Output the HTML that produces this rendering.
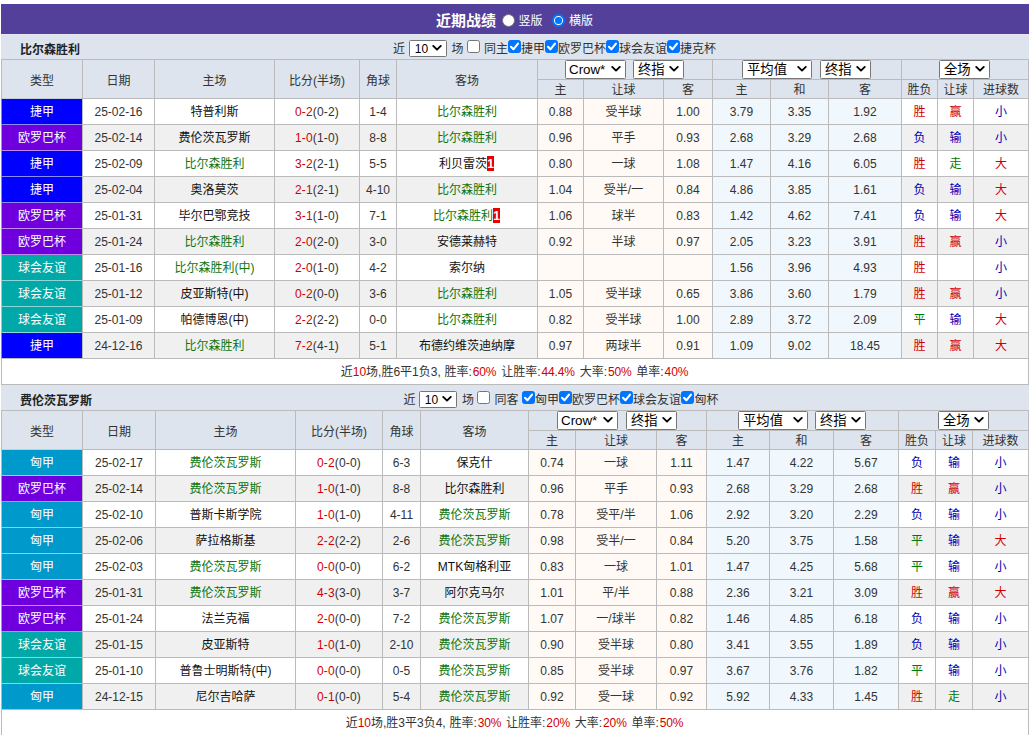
<!DOCTYPE html>
<html lang="zh-CN">
<head>
<meta charset="utf-8">
<title>近期战绩</title>
<style>
html,body{margin:0;padding:0;background:#fff;}
body{width:1032px;height:735px;overflow:hidden;position:relative;
 font-family:"Liberation Sans","Noto Sans CJK SC",sans-serif;font-size:12px;color:#333;}
#wrap{position:absolute;left:1px;top:4px;width:1028px;}
.title{height:30px;background:#52409a;color:#fff;position:relative;}
.title .tt{position:absolute;left:435px;top:2px;line-height:30px;font-size:15px;font-weight:bold;}
.title .rt{position:absolute;top:2px;line-height:31px;font-size:12px;}
.title .rd{position:absolute;top:10px;width:13px;height:13px;border-radius:50%;background:#fff;box-sizing:border-box;border:1px solid #767676;}
.title .rd.on{border:2px solid #0075ff;}
.title .rd.on:after{content:"";position:absolute;left:1.2px;top:1.2px;width:6.6px;height:6.6px;border-radius:50%;background:#0075ff;}
.team{height:25px;background:#dde4ed;position:relative;border-top:1px solid #e6e8f8;box-sizing:border-box;}
.team.t2{border-top-color:#dde4ed;}
.team .tn{position:absolute;left:19px;top:0;line-height:31px;font-weight:bold;color:#222;}
.team .tx{position:absolute;top:0;font-size:12px;line-height:29px;white-space:nowrap;}
.cb{position:absolute;top:5px;width:13px;height:13px;box-sizing:border-box;border:1px solid #767676;border-radius:2.5px;background:#fff;}
.cb.on{background:#0075ff;border-color:#0075ff;}
.cb svg{display:block;margin:-1px;}
.sel{box-sizing:border-box;border:1px solid #767676;border-radius:1.5px;background:#fff;color:#000;text-align:left;}
.sel .st{position:absolute;left:3px;top:0;white-space:nowrap;}
.sel .ar{position:absolute;right:3.2px;}
.sel.s10{position:absolute;top:5px;height:17px;}
.sel.s10 .st{font-size:12px;line-height:17px;left:4.8px;}
.sel.s10 .ar{top:3.3px;right:2.6px;}
.sel.hs{display:inline-block;position:relative;vertical-align:top;height:19px;}
.sel.hs .st{font-size:13.333px;line-height:17px;left:4px;}
.sel.hs.en .st{left:3px;}
.sel.hs .ar{top:4.2px;}
table.g{border-collapse:separate;border-spacing:0;table-layout:fixed;width:1028px;}
table.g th,table.g td{box-sizing:border-box;border-left:1px solid #bbb;border-top:1px solid #bbb;padding:0;text-align:center;font-weight:normal;font-size:12px;white-space:nowrap;overflow:hidden;}
table.g th:last-child,table.g td:last-child{border-right:1px solid #bbb;}
table.g th{background:#dde4ed;color:#333;}
tr.h1 th{padding-top:1px;}
table.g tr.h1 th.hc{height:20px;font-size:0;padding:0;text-align:left;}
tr.h2 th{height:19px;line-height:16px;padding-top:2px;}
tr.od td,tr.ev td,tr.sum td{height:26px;line-height:24px;padding-top:1px;}
tr.od td{background:#fff;}
tr.ev td{background:#f0f0f0;}
tr.od td.as,tr.ev td.as{background:#fffaf5;}
tr.od td.eu,tr.ev td.eu{background:#f0f7fd;}
table.g td.lg{color:#fff;border-left-color:rgba(255,255,255,.5);}
tr.sum td{background:#fff;border-bottom:1px solid #bbb;height:27px;}
.r{color:#d00000;}
tr.sum td{word-spacing:.4px;}
tr.sum .p{margin:0 1px 0 .9px;letter-spacing:-.1px;}
td.sc{letter-spacing:.18px;}
.b{color:#0000b4;}
.gn{color:#007a00;}
.gr{color:#0e740e;}
td.tm{color:#111;}
.rc{display:inline-block;background:#e60000;color:#fff;font-weight:bold;font-size:12px;line-height:16.5px;height:15px;width:7px;margin-right:1px;text-align:center;vertical-align:top;margin-top:4px;overflow:hidden;}

</style>
</head>
<body>
<div id="wrap">
<div class="title"><b class="tt">近期战绩</b><span class="rd" style="left:501px"></span><span class="rt" style="left:517.5px">竖版</span><span class="rd on" style="left:551px"></span><span class="rt" style="left:568px">横版</span></div>
<div class="team t1">
<b class="tn">比尔森胜利</b>
<span class="tx" style="left:392px">近</span>
<span class="sel s10" style="width:38px;left:408px"><span class="st">10</span><svg class="ar" viewBox="0 0 12 8" width="12" height="8"><path d="M2.2 1.9 L6 5.6 L9.8 1.9" fill="none" stroke="#000" stroke-width="1.9" stroke-linecap="round" stroke-linejoin="round"/></svg></span>
<span class="tx" style="left:450.5px">场</span>
<span class="cb" style="left:466px"></span>
<span class="tx" style="left:483px">同主</span>
<span class="cb on" style="left:507px"><svg viewBox="0 0 13 13" width="13" height="13"><path d="M3 6.8 L5.4 9.3 L10 3.6" fill="none" stroke="#fff" stroke-width="2.1" stroke-linecap="round" stroke-linejoin="round"/></svg></span>
<span class="tx" style="left:520px">捷甲</span>
<span class="cb on" style="left:544px"><svg viewBox="0 0 13 13" width="13" height="13"><path d="M3 6.8 L5.4 9.3 L10 3.6" fill="none" stroke="#fff" stroke-width="2.1" stroke-linecap="round" stroke-linejoin="round"/></svg></span>
<span class="tx" style="left:557px">欧罗巴杯</span>
<span class="cb on" style="left:605px"><svg viewBox="0 0 13 13" width="13" height="13"><path d="M3 6.8 L5.4 9.3 L10 3.6" fill="none" stroke="#fff" stroke-width="2.1" stroke-linecap="round" stroke-linejoin="round"/></svg></span>
<span class="tx" style="left:618px">球会友谊</span>
<span class="cb on" style="left:666px"><svg viewBox="0 0 13 13" width="13" height="13"><path d="M3 6.8 L5.4 9.3 L10 3.6" fill="none" stroke="#fff" stroke-width="2.1" stroke-linecap="round" stroke-linejoin="round"/></svg></span>
<span class="tx" style="left:679px">捷克杯</span>
</div>
<table class="g t1">
<colgroup><col style="width:81px"><col style="width:72px"><col style="width:120px"><col style="width:85px"><col style="width:37px"><col style="width:141px"><col style="width:46px"><col style="width:80px"><col style="width:49px"><col style="width:58px"><col style="width:58px"><col style="width:73px"><col style="width:36px"><col style="width:36px"><col style="width:56px"></colgroup>
<tr class="h1"><th rowspan="2">类型</th><th rowspan="2">日期</th><th rowspan="2">主场</th><th rowspan="2">比分(半场)</th><th rowspan="2">角球</th><th rowspan="2">客场</th><th colspan="3" class="hc"><span class="sel hs en" style="width:61px;margin-left:27px"><span class="st">Crow*</span><svg class="ar" viewBox="0 0 12 8" width="12" height="8"><path d="M2.2 1.9 L6 5.6 L9.8 1.9" fill="none" stroke="#000" stroke-width="1.9" stroke-linecap="round" stroke-linejoin="round"/></svg></span><span class="sel hs" style="width:51px;margin-left:7px"><span class="st">终指</span><svg class="ar" viewBox="0 0 12 8" width="12" height="8"><path d="M2.2 1.9 L6 5.6 L9.8 1.9" fill="none" stroke="#000" stroke-width="1.9" stroke-linecap="round" stroke-linejoin="round"/></svg></span></th><th colspan="3" class="hc"><span class="sel hs" style="width:70px;margin-left:29px"><span class="st">平均值</span><svg class="ar" viewBox="0 0 12 8" width="12" height="8"><path d="M2.2 1.9 L6 5.6 L9.8 1.9" fill="none" stroke="#000" stroke-width="1.9" stroke-linecap="round" stroke-linejoin="round"/></svg></span><span class="sel hs" style="width:51px;margin-left:8px"><span class="st">终指</span><svg class="ar" viewBox="0 0 12 8" width="12" height="8"><path d="M2.2 1.9 L6 5.6 L9.8 1.9" fill="none" stroke="#000" stroke-width="1.9" stroke-linecap="round" stroke-linejoin="round"/></svg></span></th><th colspan="3" class="hc"><span class="sel hs" style="width:51px;margin-left:37px"><span class="st">全场</span><svg class="ar" viewBox="0 0 12 8" width="12" height="8"><path d="M2.2 1.9 L6 5.6 L9.8 1.9" fill="none" stroke="#000" stroke-width="1.9" stroke-linecap="round" stroke-linejoin="round"/></svg></span></th></tr>
<tr class="h2"><th>主</th><th>让球</th><th>客</th><th>主</th><th>和</th><th>客</th><th>胜负</th><th>让球</th><th>进球数</th></tr>
<tr class="od"><td class="lg" style="background:#0000ff;border-top-color:#c4ccd6">捷甲</td><td>25-02-16</td><td class="tm">特普利斯</td><td class="sc"><span class="r">0-2</span>(0-2)</td><td>1-4</td><td class="tm"><span class="gr">比尔森胜利</span></td><td class="as">0.88</td><td class="as">受半球</td><td class="as">1.00</td><td class="eu">3.79</td><td class="eu">3.35</td><td class="eu">1.92</td><td><span class="r">胜</span></td><td><span class="r">赢</span></td><td><span class="b">小</span></td></tr>
<tr class="ev"><td class="lg" style="background:#6f00dd;border-top-color:#8c8cff">欧罗巴杯</td><td>25-02-14</td><td class="tm">费伦茨瓦罗斯</td><td class="sc"><span class="r">1-0</span>(1-0)</td><td>8-8</td><td class="tm"><span class="gr">比尔森胜利</span></td><td class="as">0.96</td><td class="as">平手</td><td class="as">0.93</td><td class="eu">2.68</td><td class="eu">3.29</td><td class="eu">2.68</td><td><span class="b">负</span></td><td><span class="b">输</span></td><td><span class="b">小</span></td></tr>
<tr class="od"><td class="lg" style="background:#0000ff;border-top-color:#be8cf0">捷甲</td><td>25-02-09</td><td class="tm"><span class="gr">比尔森胜利</span></td><td class="sc"><span class="r">3-2</span>(2-1)</td><td>5-5</td><td class="tm">利贝雷茨<span class="rc">1</span></td><td class="as">0.80</td><td class="as">一球</td><td class="as">1.08</td><td class="eu">1.47</td><td class="eu">4.16</td><td class="eu">6.05</td><td><span class="r">胜</span></td><td><span class="gn">走</span></td><td><span class="r">大</span></td></tr>
<tr class="ev"><td class="lg" style="background:#0000ff;border-top-color:#8c8cff">捷甲</td><td>25-02-04</td><td class="tm">奥洛莫茨</td><td class="sc"><span class="r">2-1</span>(2-1)</td><td>4-10</td><td class="tm"><span class="gr">比尔森胜利</span></td><td class="as">1.04</td><td class="as">受半/一</td><td class="as">0.84</td><td class="eu">4.86</td><td class="eu">3.85</td><td class="eu">1.61</td><td><span class="b">负</span></td><td><span class="b">输</span></td><td><span class="r">大</span></td></tr>
<tr class="od"><td class="lg" style="background:#6f00dd;border-top-color:#8c8cff">欧罗巴杯</td><td>25-01-31</td><td class="tm">毕尔巴鄂竞技</td><td class="sc"><span class="r">3-1</span>(1-0)</td><td>7-1</td><td class="tm"><span class="gr">比尔森胜利</span><span class="rc">1</span></td><td class="as">1.06</td><td class="as">球半</td><td class="as">0.83</td><td class="eu">1.42</td><td class="eu">4.62</td><td class="eu">7.41</td><td><span class="b">负</span></td><td><span class="b">输</span></td><td><span class="r">大</span></td></tr>
<tr class="ev"><td class="lg" style="background:#6f00dd;border-top-color:#be8cf0">欧罗巴杯</td><td>25-01-24</td><td class="tm"><span class="gr">比尔森胜利</span></td><td class="sc"><span class="r">2-0</span>(2-0)</td><td>3-0</td><td class="tm">安德莱赫特</td><td class="as">0.92</td><td class="as">半球</td><td class="as">0.97</td><td class="eu">2.05</td><td class="eu">3.23</td><td class="eu">3.91</td><td><span class="r">胜</span></td><td><span class="r">赢</span></td><td><span class="b">小</span></td></tr>
<tr class="od"><td class="lg" style="background:#00a8a8;border-top-color:#be8cf0">球会友谊</td><td>25-01-16</td><td class="tm"><span class="gr">比尔森胜利(中)</span></td><td class="sc"><span class="r">2-0</span>(1-0)</td><td>4-2</td><td class="tm">索尔纳</td><td class="as"></td><td class="as"></td><td class="as"></td><td class="eu">1.56</td><td class="eu">3.96</td><td class="eu">4.93</td><td><span class="r">胜</span></td><td></td><td><span class="b">小</span></td></tr>
<tr class="ev"><td class="lg" style="background:#00a8a8;border-top-color:#8cd8d8">球会友谊</td><td>25-01-12</td><td class="tm">皮亚斯特(中)</td><td class="sc"><span class="r">0-2</span>(0-0)</td><td>3-6</td><td class="tm"><span class="gr">比尔森胜利</span></td><td class="as">1.05</td><td class="as">受半球</td><td class="as">0.65</td><td class="eu">3.86</td><td class="eu">3.60</td><td class="eu">1.79</td><td><span class="r">胜</span></td><td><span class="r">赢</span></td><td><span class="b">小</span></td></tr>
<tr class="od"><td class="lg" style="background:#00a8a8;border-top-color:#8cd8d8">球会友谊</td><td>25-01-09</td><td class="tm">帕德博恩(中)</td><td class="sc"><span class="r">2-2</span>(2-2)</td><td>0-0</td><td class="tm"><span class="gr">比尔森胜利</span></td><td class="as">0.82</td><td class="as">受半球</td><td class="as">1.00</td><td class="eu">2.89</td><td class="eu">3.72</td><td class="eu">2.09</td><td><span class="gn">平</span></td><td><span class="b">输</span></td><td><span class="r">大</span></td></tr>
<tr class="ev"><td class="lg" style="background:#0000ff;border-top-color:#8cd8d8">捷甲</td><td>24-12-16</td><td class="tm"><span class="gr">比尔森胜利</span></td><td class="sc"><span class="r">7-2</span>(4-1)</td><td>5-1</td><td class="tm">布德约维茨迪纳摩</td><td class="as">0.97</td><td class="as">两球半</td><td class="as">0.91</td><td class="eu">1.09</td><td class="eu">9.02</td><td class="eu">18.45</td><td><span class="r">胜</span></td><td><span class="r">赢</span></td><td><span class="r">大</span></td></tr>
<tr class="sum"><td colspan="15">近<span class="r">10</span>场,胜6平1负3, 胜率:<span class="r p">60%</span> 让胜率:<span class="r p">44.4%</span> 大率:<span class="r p">50%</span> 单率:<span class="r p">40%</span></td></tr>
</table>
<div class="team t2">
<b class="tn">费伦茨瓦罗斯</b>
<span class="tx" style="left:402.5px">近</span>
<span class="sel s10" style="width:38px;left:418px"><span class="st">10</span><svg class="ar" viewBox="0 0 12 8" width="12" height="8"><path d="M2.2 1.9 L6 5.6 L9.8 1.9" fill="none" stroke="#000" stroke-width="1.9" stroke-linecap="round" stroke-linejoin="round"/></svg></span>
<span class="tx" style="left:461px">场</span>
<span class="cb" style="left:476px"></span>
<span class="tx" style="left:493.5px">同客</span>
<span class="cb on" style="left:521px"><svg viewBox="0 0 13 13" width="13" height="13"><path d="M3 6.8 L5.4 9.3 L10 3.6" fill="none" stroke="#fff" stroke-width="2.1" stroke-linecap="round" stroke-linejoin="round"/></svg></span>
<span class="tx" style="left:534px">匈甲</span>
<span class="cb on" style="left:558px"><svg viewBox="0 0 13 13" width="13" height="13"><path d="M3 6.8 L5.4 9.3 L10 3.6" fill="none" stroke="#fff" stroke-width="2.1" stroke-linecap="round" stroke-linejoin="round"/></svg></span>
<span class="tx" style="left:571px">欧罗巴杯</span>
<span class="cb on" style="left:619px"><svg viewBox="0 0 13 13" width="13" height="13"><path d="M3 6.8 L5.4 9.3 L10 3.6" fill="none" stroke="#fff" stroke-width="2.1" stroke-linecap="round" stroke-linejoin="round"/></svg></span>
<span class="tx" style="left:632px">球会友谊</span>
<span class="cb on" style="left:680px"><svg viewBox="0 0 13 13" width="13" height="13"><path d="M3 6.8 L5.4 9.3 L10 3.6" fill="none" stroke="#fff" stroke-width="2.1" stroke-linecap="round" stroke-linejoin="round"/></svg></span>
<span class="tx" style="left:693.5px">匈杯</span>
</div>
<table class="g t2">
<colgroup><col style="width:81px"><col style="width:73px"><col style="width:140px"><col style="width:87px"><col style="width:38px"><col style="width:108px"><col style="width:47px"><col style="width:81px"><col style="width:50px"><col style="width:63px"><col style="width:64px"><col style="width:65px"><col style="width:37px"><col style="width:37px"><col style="width:57px"></colgroup>
<tr class="h1"><th rowspan="2">类型</th><th rowspan="2">日期</th><th rowspan="2">主场</th><th rowspan="2">比分(半场)</th><th rowspan="2">角球</th><th rowspan="2">客场</th><th colspan="3" class="hc"><span class="sel hs en" style="width:61px;margin-left:28px"><span class="st">Crow*</span><svg class="ar" viewBox="0 0 12 8" width="12" height="8"><path d="M2.2 1.9 L6 5.6 L9.8 1.9" fill="none" stroke="#000" stroke-width="1.9" stroke-linecap="round" stroke-linejoin="round"/></svg></span><span class="sel hs" style="width:51px;margin-left:8px"><span class="st">终指</span><svg class="ar" viewBox="0 0 12 8" width="12" height="8"><path d="M2.2 1.9 L6 5.6 L9.8 1.9" fill="none" stroke="#000" stroke-width="1.9" stroke-linecap="round" stroke-linejoin="round"/></svg></span></th><th colspan="3" class="hc"><span class="sel hs" style="width:70px;margin-left:31px"><span class="st">平均值</span><svg class="ar" viewBox="0 0 12 8" width="12" height="8"><path d="M2.2 1.9 L6 5.6 L9.8 1.9" fill="none" stroke="#000" stroke-width="1.9" stroke-linecap="round" stroke-linejoin="round"/></svg></span><span class="sel hs" style="width:51px;margin-left:7px"><span class="st">终指</span><svg class="ar" viewBox="0 0 12 8" width="12" height="8"><path d="M2.2 1.9 L6 5.6 L9.8 1.9" fill="none" stroke="#000" stroke-width="1.9" stroke-linecap="round" stroke-linejoin="round"/></svg></span></th><th colspan="3" class="hc"><span class="sel hs" style="width:51px;margin-left:39px"><span class="st">全场</span><svg class="ar" viewBox="0 0 12 8" width="12" height="8"><path d="M2.2 1.9 L6 5.6 L9.8 1.9" fill="none" stroke="#000" stroke-width="1.9" stroke-linecap="round" stroke-linejoin="round"/></svg></span></th></tr>
<tr class="h2"><th>主</th><th>让球</th><th>客</th><th>主</th><th>和</th><th>客</th><th>胜负</th><th>让球</th><th>进球数</th></tr>
<tr class="od"><td class="lg" style="background:#0099cc;border-top-color:#c4ccd6">匈甲</td><td>25-02-17</td><td class="tm"><span class="gr">费伦茨瓦罗斯</span></td><td class="sc"><span class="r">0-2</span>(0-0)</td><td>6-3</td><td class="tm">保克什</td><td class="as">0.74</td><td class="as">一球</td><td class="as">1.11</td><td class="eu">1.47</td><td class="eu">4.22</td><td class="eu">5.67</td><td><span class="b">负</span></td><td><span class="b">输</span></td><td><span class="b">小</span></td></tr>
<tr class="ev"><td class="lg" style="background:#6f00dd;border-top-color:#8cd1e8">欧罗巴杯</td><td>25-02-14</td><td class="tm"><span class="gr">费伦茨瓦罗斯</span></td><td class="sc"><span class="r">1-0</span>(1-0)</td><td>8-8</td><td class="tm">比尔森胜利</td><td class="as">0.96</td><td class="as">平手</td><td class="as">0.93</td><td class="eu">2.68</td><td class="eu">3.29</td><td class="eu">2.68</td><td><span class="r">胜</span></td><td><span class="r">赢</span></td><td><span class="b">小</span></td></tr>
<tr class="od"><td class="lg" style="background:#0099cc;border-top-color:#be8cf0">匈甲</td><td>25-02-10</td><td class="tm">普斯卡斯学院</td><td class="sc"><span class="r">1-0</span>(1-0)</td><td>4-11</td><td class="tm"><span class="gr">费伦茨瓦罗斯</span></td><td class="as">0.78</td><td class="as">受平/半</td><td class="as">1.06</td><td class="eu">2.92</td><td class="eu">3.20</td><td class="eu">2.29</td><td><span class="b">负</span></td><td><span class="b">输</span></td><td><span class="b">小</span></td></tr>
<tr class="ev"><td class="lg" style="background:#0099cc;border-top-color:#8cd1e8">匈甲</td><td>25-02-06</td><td class="tm">萨拉格斯基</td><td class="sc"><span class="r">2-2</span>(2-2)</td><td>2-6</td><td class="tm"><span class="gr">费伦茨瓦罗斯</span></td><td class="as">0.98</td><td class="as">受半/一</td><td class="as">0.84</td><td class="eu">5.20</td><td class="eu">3.75</td><td class="eu">1.58</td><td><span class="gn">平</span></td><td><span class="b">输</span></td><td><span class="r">大</span></td></tr>
<tr class="od"><td class="lg" style="background:#0099cc;border-top-color:#8cd1e8">匈甲</td><td>25-02-03</td><td class="tm"><span class="gr">费伦茨瓦罗斯</span></td><td class="sc"><span class="r">0-0</span>(0-0)</td><td>6-2</td><td class="tm">MTK匈格利亚</td><td class="as">0.83</td><td class="as">一球</td><td class="as">1.01</td><td class="eu">1.47</td><td class="eu">4.25</td><td class="eu">5.68</td><td><span class="gn">平</span></td><td><span class="b">输</span></td><td><span class="b">小</span></td></tr>
<tr class="ev"><td class="lg" style="background:#6f00dd;border-top-color:#8cd1e8">欧罗巴杯</td><td>25-01-31</td><td class="tm"><span class="gr">费伦茨瓦罗斯</span></td><td class="sc"><span class="r">4-3</span>(3-0)</td><td>3-7</td><td class="tm">阿尔克马尔</td><td class="as">1.01</td><td class="as">平/半</td><td class="as">0.88</td><td class="eu">2.36</td><td class="eu">3.21</td><td class="eu">3.09</td><td><span class="r">胜</span></td><td><span class="r">赢</span></td><td><span class="r">大</span></td></tr>
<tr class="od"><td class="lg" style="background:#6f00dd;border-top-color:#be8cf0">欧罗巴杯</td><td>25-01-24</td><td class="tm">法兰克福</td><td class="sc"><span class="r">2-0</span>(0-0)</td><td>7-2</td><td class="tm"><span class="gr">费伦茨瓦罗斯</span></td><td class="as">1.07</td><td class="as">一/球半</td><td class="as">0.82</td><td class="eu">1.46</td><td class="eu">4.85</td><td class="eu">6.18</td><td><span class="b">负</span></td><td><span class="b">输</span></td><td><span class="b">小</span></td></tr>
<tr class="ev"><td class="lg" style="background:#00a8a8;border-top-color:#be8cf0">球会友谊</td><td>25-01-15</td><td class="tm">皮亚斯特</td><td class="sc"><span class="r">1-0</span>(1-0)</td><td>2-10</td><td class="tm"><span class="gr">费伦茨瓦罗斯</span></td><td class="as">0.90</td><td class="as">受半球</td><td class="as">0.80</td><td class="eu">3.41</td><td class="eu">3.55</td><td class="eu">1.89</td><td><span class="b">负</span></td><td><span class="b">输</span></td><td><span class="b">小</span></td></tr>
<tr class="od"><td class="lg" style="background:#00a8a8;border-top-color:#8cd8d8">球会友谊</td><td>25-01-10</td><td class="tm">普鲁士明斯特(中)</td><td class="sc"><span class="r">0-0</span>(0-0)</td><td>0-5</td><td class="tm"><span class="gr">费伦茨瓦罗斯</span></td><td class="as">0.85</td><td class="as">受半球</td><td class="as">0.97</td><td class="eu">3.67</td><td class="eu">3.76</td><td class="eu">1.82</td><td><span class="gn">平</span></td><td><span class="b">输</span></td><td><span class="b">小</span></td></tr>
<tr class="ev"><td class="lg" style="background:#0099cc;border-top-color:#8cd8d8">匈甲</td><td>24-12-15</td><td class="tm">尼尔吉哈萨</td><td class="sc"><span class="r">0-1</span>(0-0)</td><td>5-4</td><td class="tm"><span class="gr">费伦茨瓦罗斯</span></td><td class="as">0.92</td><td class="as">受一球</td><td class="as">0.92</td><td class="eu">5.92</td><td class="eu">4.33</td><td class="eu">1.45</td><td><span class="r">胜</span></td><td><span class="gn">走</span></td><td><span class="b">小</span></td></tr>
<tr class="sum"><td colspan="15">近<span class="r">10</span>场,胜3平3负4, 胜率:<span class="r p">30%</span> 让胜率:<span class="r p">20%</span> 大率:<span class="r p">20%</span> 单率:<span class="r p">50%</span></td></tr>
</table>
</div>
</body>
</html>
